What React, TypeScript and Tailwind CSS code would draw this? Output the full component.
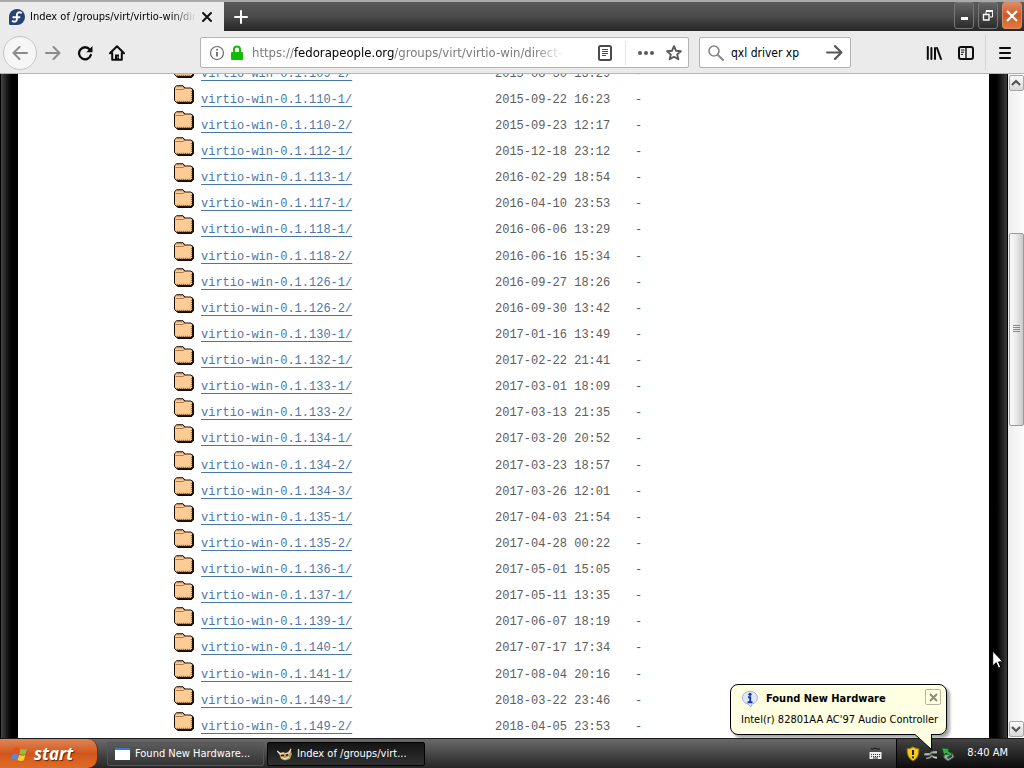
import React from 'react';

type Entry = { name: string; date: string };

const entries: Entry[] = [
  { name: 'virtio-win-0.1.109-2/', date: '2015-08-30 13:29' },
  { name: 'virtio-win-0.1.110-1/', date: '2015-09-22 16:23' },
  { name: 'virtio-win-0.1.110-2/', date: '2015-09-23 12:17' },
  { name: 'virtio-win-0.1.112-1/', date: '2015-12-18 23:12' },
  { name: 'virtio-win-0.1.113-1/', date: '2016-02-29 18:54' },
  { name: 'virtio-win-0.1.117-1/', date: '2016-04-10 23:53' },
  { name: 'virtio-win-0.1.118-1/', date: '2016-06-06 13:29' },
  { name: 'virtio-win-0.1.118-2/', date: '2016-06-16 15:34' },
  { name: 'virtio-win-0.1.126-1/', date: '2016-09-27 18:26' },
  { name: 'virtio-win-0.1.126-2/', date: '2016-09-30 13:42' },
  { name: 'virtio-win-0.1.130-1/', date: '2017-01-16 13:49' },
  { name: 'virtio-win-0.1.132-1/', date: '2017-02-22 21:41' },
  { name: 'virtio-win-0.1.133-1/', date: '2017-03-01 18:09' },
  { name: 'virtio-win-0.1.133-2/', date: '2017-03-13 21:35' },
  { name: 'virtio-win-0.1.134-1/', date: '2017-03-20 20:52' },
  { name: 'virtio-win-0.1.134-2/', date: '2017-03-23 18:57' },
  { name: 'virtio-win-0.1.134-3/', date: '2017-03-26 12:01' },
  { name: 'virtio-win-0.1.135-1/', date: '2017-04-03 21:54' },
  { name: 'virtio-win-0.1.135-2/', date: '2017-04-28 00:22' },
  { name: 'virtio-win-0.1.136-1/', date: '2017-05-01 15:05' },
  { name: 'virtio-win-0.1.137-1/', date: '2017-05-11 13:35' },
  { name: 'virtio-win-0.1.139-1/', date: '2017-06-07 18:19' },
  { name: 'virtio-win-0.1.140-1/', date: '2017-07-17 17:34' },
  { name: 'virtio-win-0.1.141-1/', date: '2017-08-04 20:16' },
  { name: 'virtio-win-0.1.149-1/', date: '2018-03-22 23:46' },
  { name: 'virtio-win-0.1.149-2/', date: '2018-04-05 23:53' },
];

function FolderIcon() {
  return (
    <svg width="20" height="20" viewBox="0 0 20 20" className="block" aria-hidden="true">
      <path d="M1.500 3.500 3.500 1h6l2 2H18l2 2.500v11L17.500 19H4l-3-2.500z" fill="#120a04" />
      <path d="M.5 3 2.500.7h6.500l1.500 2.300h6.500l1.500 1.700v10.800l-1.800 1.800H2.600L.5 15.500z" fill="#fdcb94" stroke="#1c1008" />
      <path d="M1.500 4.500h7.500l2-1.200M3 1.700h5.500" stroke="#b07c4e" fill="none" />
      <path d="M3 16.300h13M17.300 6v9.500" stroke="#8f5a2d" strokeDasharray="1 1" fill="none" />
    </svg>
  );
}

function FedoraIcon() {
  return (
    <svg width="16" height="16" viewBox="0 0 16 16" className="shrink-0" aria-hidden="true">
      <path d="M8 0a8 8 0 1 1 0 16H1.500A1.500 1.500 0 0 1 0 14.500V8a8 8 0 0 1 8-8z" fill="#294172" />
      <path d="M12 3.700C10 2.600 7.900 3.700 7.900 5.700v4.400c0 2.200-2.100 3.200-4.300 2.100M4.300 8.200h6.200" stroke="#fff" strokeWidth="1.900" fill="none" strokeLinecap="round" />
    </svg>
  );
}

function BackArrow() {
  return (
    <svg width="16" height="16" viewBox="0 0 16 16" fill="none" stroke="#8b8b8b" strokeWidth="2" strokeLinecap="round" strokeLinejoin="round" aria-hidden="true">
      <path d="M15 8H1.500M7.500 2l-6 6 6 6" />
    </svg>
  );
}

function ForwardArrow({ color, size }: { color: string; size: number }) {
  return (
    <svg width={size} height={size} viewBox="0 0 16 16" fill="none" stroke={color} strokeWidth="2" strokeLinecap="round" strokeLinejoin="round" aria-hidden="true">
      <path d="M1 8h13.500M8.500 2l6 6-6 6" />
    </svg>
  );
}

function TitleBar() {
  return (
    <header className="flex h-[31px] shrink-0 bg-linear-to-b from-[#5a5a5a] via-[#4a4a4a] to-[#262626] border-t-2 border-[#a9aaa9]">
      <div className="flex w-[224px] shrink-0 items-center bg-[#ebebeb] pl-[9px] pr-2">
        <FedoraIcon />
        <span className="ml-[5px] h-[18px] w-[166px] overflow-hidden whitespace-nowrap text-[11px] leading-[18px] text-black mask-r-from-85% mask-r-to-100%">
          Index of /groups/virt/virtio-win/direct
        </span>
        <button aria-label="Close tab" className="ml-[5px] flex size-3 items-center justify-center">
          <svg width="12" height="12" viewBox="0 0 12 12" stroke="#111" strokeWidth="2" strokeLinecap="round"><path d="m2 2 8 8M10 2l-8 8" /></svg>
        </button>
      </div>
      <button aria-label="New tab" className="flex w-[34px] items-center justify-center">
        <svg width="14" height="14" viewBox="0 0 14 14" stroke="#fff" strokeWidth="2" strokeLinecap="round"><path d="M7 1v12M1 7h12" /></svg>
      </button>
      <div className="ml-auto flex items-start gap-1 pr-[2px]">
        <button aria-label="Minimize" className="flex h-[27px] w-5 items-center justify-center rounded-[3px] border border-[#777] bg-linear-to-b from-[#666] to-[#2c2c2c]">
          <svg width="11" height="11" viewBox="0 0 11 11"><path d="M2 7h7v3H2z" fill="#fff" /></svg>
        </button>
        <button aria-label="Restore" className="flex h-[27px] w-5 items-center justify-center rounded-[3px] border border-[#777] bg-linear-to-b from-[#666] to-[#2c2c2c]">
          <svg width="12" height="12" viewBox="0 0 12 12" fill="none" stroke="#fff"><path d="M4 4V1.500h6.500V7H8" /><path d="M4 1h7" strokeWidth="2" /><path d="M1.500 4.500H7V10H1.500z" strokeWidth="1.400" /></svg>
        </button>
        <button aria-label="Close" className="flex h-[27px] w-5 items-center justify-center rounded-[3px] border border-[#d98a65] bg-linear-to-b from-[#e08a60] via-[#cf5a28] to-[#e07a40]">
          <svg width="12" height="12" viewBox="0 0 12 12" stroke="#fff" strokeWidth="2.200"><path d="m1 1 10 10M11 1 1 11" /></svg>
        </button>
      </div>
    </header>
  );
}

function Toolbar() {
  return (
    <nav className="flex h-[43px] shrink-0 items-center border-b border-[#b4b4b4] bg-[#ebebeb] pt-px pl-[3px]">
      <button aria-label="Back" className="flex size-[34px] items-center justify-center rounded-full border border-[#c4c4c4] bg-[#f6f6f6]"><BackArrow /></button>
      <button aria-label="Forward" className="ml-2 flex size-4 items-center justify-center"><ForwardArrow color="#8b8b8b" size={16} /></button>
      <button aria-label="Reload" className="ml-4 flex size-4 items-center justify-center">
        <svg width="16" height="16" viewBox="0 0 16 16" fill="none" aria-hidden="true">
          <path d="M12.800 4.600A6 6 0 1 0 13.800 10" stroke="#0c0c0d" strokeWidth="2.300" strokeLinecap="round" />
          <path d="M15.500 1v6.200H9.300z" fill="#0c0c0d" />
        </svg>
      </button>
      <button aria-label="Home" className="ml-4 flex size-4 items-center justify-center">
        <svg width="16" height="16" viewBox="0 0 16 16" fill="none" aria-hidden="true">
          <path d="M1 8.200 8 1.300l7 6.900M3.200 8v6.800h9.600V8" stroke="#0c0c0d" strokeWidth="2" strokeLinecap="round" strokeLinejoin="round" />
          <path d="M6 15V9.500h4V15z" fill="#0c0c0d" /><path d="M8.400 11.500h1v1.200h-1z" fill="#ebebeb" />
        </svg>
      </button>

      <div className="ml-[75px] flex h-[31px] min-w-0 flex-1 items-center rounded-[2px] border border-[#b3b3b3] bg-white pl-2">
        <svg width="16" height="16" viewBox="0 0 16 16" fill="none" className="shrink-0" aria-hidden="true">
          <circle cx="8" cy="8" r="6.500" stroke="#6a6a6a" strokeWidth="1.200" /><path d="M8 7v4.500" stroke="#6a6a6a" strokeWidth="1.800" /><circle cx="8" cy="4.700" r="1" fill="#6a6a6a" />
        </svg>
        <svg width="12" height="16" viewBox="0 0 12 16" fill="none" className="ml-[6px] shrink-0" aria-hidden="true">
          <path d="M3 8V4.600a3 3 0 0 1 6 0V8" stroke="#12bc00" strokeWidth="2" /><rect y="7" width="12" height="8" rx="1" fill="#12bc00" />
        </svg>
        <div className="ml-[9px] w-[313px] overflow-hidden whitespace-nowrap text-[13px] leading-[20px] text-[#7b7b7b] mask-r-from-90% mask-r-to-100%">
          https://<span className="text-black">fedorapeople.org</span>/groups/virt/virtio-win/direct-
        </div>
        <button aria-label="Reader view" className="ml-auto shrink-0">
          <svg width="16" height="16" viewBox="0 0 16 16" fill="none" stroke="#4a4a4f" aria-hidden="true"><rect x="2" y="1" width="12" height="14" rx="1.500" strokeWidth="2" /><path d="M5 4.500h6M5 6.500h6M5 8.500h6M5 10.500h4" /></svg>
        </button>
        <span className="ml-3 h-6 w-px shrink-0 bg-[#e4e4e4]" />
        <button aria-label="Page actions" className="ml-3 shrink-0">
          <svg width="16" height="16" viewBox="0 0 16 16" fill="#58585c" aria-hidden="true"><circle cx="2" cy="8" r="2" /><circle cx="8" cy="8" r="2" /><circle cx="14" cy="8" r="2" /></svg>
        </button>
        <button aria-label="Bookmark this page" className="ml-3 mr-[6px] shrink-0">
          <svg width="16" height="16" viewBox="0 0 16 16" fill="none" aria-hidden="true"><path d="m8 1.200 2 4.500 4.900.5-3.700 3.200 1.100 4.900L8 11.800l-4.300 2.500 1.100-4.900L1.100 6.200 6 5.700z" stroke="#58585c" strokeWidth="1.900" strokeLinejoin="round" /></svg>
        </button>
      </div>

      <div className="ml-[10px] flex h-[31px] w-[152px] items-center rounded-[2px] border border-[#b3b3b3] bg-white px-[7px]">
        <svg width="18" height="18" viewBox="0 0 18 18" fill="none" stroke="#858585" className="shrink-0" aria-hidden="true"><circle cx="7" cy="7" r="5" strokeWidth="1.600" /><path d="m10.600 10.600 5.400 5.400" strokeWidth="2" strokeLinecap="round" /></svg>
        <input aria-label="Search" defaultValue="qxl driver xp" className="ml-[6px] w-0 min-w-0 flex-1 bg-transparent text-[12px] leading-[20px] text-black outline-none" />
        <button aria-label="Go" className="shrink-0"><ForwardArrow color="#58585c" size={17} /></button>
      </div>

      <button aria-label="Library" className="ml-[75px] shrink-0">
        <svg width="16" height="16" viewBox="0 0 16 16" stroke="#0c0c0d" strokeWidth="2" strokeLinecap="round" aria-hidden="true"><path d="M1.800 2v12M5.400 3v11M9 3v11M11 3l4 11" /></svg>
      </button>
      <button aria-label="Sidebars" className="ml-4 shrink-0">
        <svg width="16" height="16" viewBox="0 0 16 16" fill="none" stroke="#0c0c0d" aria-hidden="true"><rect x="1" y="2" width="14" height="12" rx="2" strokeWidth="2" /><path d="M8 2v12" strokeWidth="1.400" /><path d="M3 5h3.500M3 7.200h3M3 9.400h2" /></svg>
      </button>
      <span className="ml-[11px] h-[35px] w-px shrink-0 bg-[#d4d4d4]" />
      <button aria-label="Menu" className="mx-3 shrink-0">
        <svg width="14" height="14" viewBox="0 0 14 14" stroke="#0c0c0d" strokeWidth="2" strokeLinecap="round" aria-hidden="true"><path d="M2 2h10M2 7h10M2 12h10" /></svg>
      </button>
    </nav>
  );
}

function ScrollArrow({ label, d }: { label: string; d: string }) {
  return (
    <button aria-label={label} className="flex h-4 w-[15px] shrink-0 items-center justify-center rounded-[2px] border border-[#a8a8a8] bg-linear-to-b from-[#fafafa] to-[#d8d8d8]">
      <svg width="10" height="8" viewBox="0 0 10 8" fill="none" stroke="#555" strokeWidth="2.200" aria-hidden="true"><path d={d} /></svg>
    </button>
  );
}

function Scrollbar() {
  return (
    <div className="flex w-4 shrink-0 flex-col items-center bg-linear-to-r from-[#ededed] to-[#fcfcfc] py-px">
      <ScrollArrow label="Scroll up" d="m1 6 4-4 4 4" />
      <div className="flex-[142]" />
      <div className="flex w-[15px] flex-[192] items-center justify-center rounded-[2px] border border-[#9a9a9a] bg-linear-to-r from-[#fafafa] via-[#e8e8e8] to-[#c8c8c8]">
        <svg width="7" height="8" viewBox="0 0 7 8" stroke="#8a8a8a" aria-hidden="true"><path d="M0 .5h7M0 2.500h7M0 4.500h7M0 6.500h7" /></svg>
      </div>
      <div className="flex-[296]" />
      <ScrollArrow label="Scroll down" d="m1 2 4 4 4-4" />
    </div>
  );
}

function Listing() {
  return (
    <main className="flex min-h-0 flex-1 bg-white">
      <div className="w-[18px] shrink-0 border-l border-black bg-linear-to-r from-[#454545] to-black to-80%" />
      <div className="min-w-0 flex-1 overflow-hidden pl-[156px]">
        <table className="-mt-[15px] table-fixed border-collapse font-['Liberation_Mono',monospace] text-[12px] leading-[21px] text-[#5c5c5c]">
          <colgroup>
            <col className="w-[27px]" /><col className="w-[294px]" /><col className="w-[140px]" /><col className="w-5" />
          </colgroup>
          <tbody>
            {entries.map((e) => (
              <tr key={e.name} className="h-[26px] nth-[8n+7]:h-[27px]">
                <td className="p-0 align-top"><FolderIcon /></td>
                <td className="p-0 pt-[5px] align-top"><a href={e.name} className="text-[#4a76a8] underline decoration-1 underline-offset-[3px]">{e.name}</a></td>
                <td className="p-0 pt-[5px] align-top whitespace-nowrap">{e.date}</td>
                <td className="p-0 pt-[5px] align-top">-</td>
              </tr>
            ))}
          </tbody>
        </table>
      </div>
      <div className="w-[19px] shrink-0 border-r border-black bg-linear-to-r from-black from-20% to-[#3c3c3c]" />
      <Scrollbar />
    </main>
  );
}

function Taskbar() {
  return (
    <footer className="flex h-[30px] shrink-0 border-t border-[#1c1c1c] bg-linear-to-b from-[#6a6a6a] via-[#484848] to-[#262626] text-[11px] text-white">
      <button className="flex w-[98px] shrink-0 items-center rounded-r-[10px] border-r border-[#6b2c0c] bg-linear-to-b from-[#e08550] via-[#d2561c] to-[#dd6d28] pl-[10px]">
        <svg width="20" height="18" viewBox="0 0 20 18" aria-hidden="true">
          <path d="M4 3.200C6 2 8 2 9.800 3.200L8.400 8.400C6.600 7.400 4.600 7.400 2.600 8.400z" fill="#e8501c" />
          <path d="M10.800 3.600c2 1.200 4.200 1.200 6.200.2l-1.500 5.200c-2 1-4 1-6.100-.2z" fill="#8ac43c" />
          <path d="M2.300 9.400c2-1 4-1 5.800 0l-1.500 5.200c-1.800-1-3.800-1-5.800 0z" fill="#5a8ae0" />
          <path d="M9.100 9.800c2 1.200 4.200 1.200 6.200.2l-1.500 5.200c-2 1-4.200 1-6.200-.2z" fill="#f8d030" />
        </svg>
        <span className="ml-1 font-['Open_Sans',sans-serif] text-[17px] leading-[22px] font-bold italic text-shadow-[1px_1px_1px_#5a2408]">start</span>
      </button>
      <button className="mt-[3px] ml-[9px] flex h-6 w-[157px] shrink-0 items-center gap-1 overflow-hidden rounded-[2px] border border-[#555] bg-linear-to-b from-[#5c5c5c] to-[#343434] pl-[7px] whitespace-nowrap">
        <svg width="16" height="14" viewBox="0 0 16 14" className="shrink-0" aria-hidden="true"><path d="M0 1h15v12H0z" fill="#fff" /><path d="M0 1h15v2H0z" fill="#3a78d8" /></svg>
        Found New Hardware...
      </button>
      <button className="mt-[3px] ml-[3px] flex h-6 w-[158px] shrink-0 items-center gap-1 overflow-hidden rounded-[2px] border border-black bg-linear-to-b from-[#151515] to-[#303030] pl-[9px] whitespace-nowrap">
        <svg width="16" height="14" viewBox="0 0 16 14" fill="none" className="shrink-0" aria-hidden="true">
          <path d="M0 4l3 2 3-1 3 1 3-2 2-3v4l1 2-2 5-5 1.500-4-1.500-1-3z" fill="#b89a68" />
          <path d="M0 4l4 3 3-1M8 7l4-1 2-4M4 10l4 2 4-2" stroke="#f0e4c4" strokeWidth="1.200" />
          <path d="M4 8.500h3M9 8.500l2-1" stroke="#241808" strokeWidth="1.500" />
        </svg>
        Index of /groups/virt...
      </button>
      <div className="ml-auto flex w-7 items-center pl-px">
        <svg width="14" height="14" viewBox="0 0 14 14" aria-hidden="true">
          <path d="M2 1.500c2 1.500 3-1 5 0s3 1 4 0" stroke="#111" fill="none" />
          <path d="M.5 5h12v7H.5z" fill="#eee" /><path d="M2 7.500h9M2 9.500h9" stroke="#333" strokeDasharray="1 1" />
          <path d="M4 11h5" stroke="#333" />
        </svg>
      </div>
      <div className="flex w-[128px] shrink-0 items-center border-l border-black bg-linear-to-b from-[#444] to-[#0c0c0c] pl-[9px]">
        <svg width="14" height="16" viewBox="0 0 14 16" aria-hidden="true">
          <path d="M7 .8c2 1.400 3.800 1.800 5.800 1.800.4 5.400-1 9.800-5.800 12.400C2.200 12.400.8 8 1.200 2.600 3.200 2.600 5 2.200 7 .8z" fill="#f4ca1c" stroke="#8d6c08" />
          <path d="M7 4v5" stroke="#222" strokeWidth="2" /><circle cx="7" cy="11.300" r="1.100" fill="#222" />
        </svg>
        <svg width="16" height="16" viewBox="0 0 16 16" className="ml-[3px]" fill="none" aria-hidden="true">
          <path d="M1 8.500h5l3-2h5M3 12.500l4-1 2-2M9 10l3 1.500h2" stroke="#8b958b" strokeWidth="1.800" /><path d="M2 8h4M10 6h4M10 11l4 1" stroke="#dfe3df" />
        </svg>
        <svg width="14" height="16" viewBox="0 0 14 16" className="ml-[2px]" aria-hidden="true">
          <path d="m3 9 8-2 2 4-6 4-4-3z" fill="#9aa8a0" stroke="#4d5a52" /><path d="m6 11 5-2v2l-4 2z" fill="#1b4a44" />
          <path d="M1 2l7 1-1 2 4 3-2 2-4-3-2 2z" fill="#38b048" stroke="#0f5c24" strokeWidth=".7" />
        </svg>
        <time className="ml-auto pr-4 whitespace-nowrap">8:40 AM</time>
      </div>
    </footer>
  );
}

function Balloon() {
  return (
    <aside className="absolute right-[77px] bottom-[33px] h-[51px] w-[217px] rounded-[8px] border border-black bg-[#ffffe1] px-[10px] pt-1 text-[11px] text-black shadow-[3px_3px_3px_rgba(0,0,0,0.35)]">
      <div className="flex h-5 items-center">
        <svg width="18" height="18" viewBox="0 0 18 18" className="shrink-0" aria-hidden="true">
          <path d="M9 1.200a7.500 6.600 0 0 1 1.800 13L10 17l-3-2.800A7.500 6.600 0 0 1 9 1.200z" fill="#dfe8fa" stroke="#a6b3cf" />
          <circle cx="9" cy="4.300" r="1.600" fill="#1a35a5" /><path d="M7 7.300h2.200v4.700M6.500 12.300h5" stroke="#1a35a5" strokeWidth="1.900" fill="none" />
        </svg>
        <strong className="ml-[7px] whitespace-nowrap">Found New Hardware</strong>
      </div>
      <p className="mt-px leading-[20px] whitespace-nowrap">Intel(r) 82801AA AC'97 Audio Controller</p>
      <button aria-label="Close notification" className="absolute top-1 right-[5px] flex size-4 items-center justify-center rounded-[2px] border border-[#b4b4a0]">
        <svg width="9" height="9" viewBox="0 0 9 9" stroke="#8c8c80" strokeWidth="2"><path d="m1 1 7 7M8 1 1 8" /></svg>
      </button>
      <svg width="20" height="17" viewBox="0 0 20 17" className="absolute top-[49px] right-[12px]" aria-hidden="true">
        <path d="M1 0v.5L17.500 15.500V0z" fill="#ffffe1" /><path d="M1 .5 17.500 15.500V0" stroke="#000" fill="none" />
      </svg>
    </aside>
  );
}

export default function App() {
  return (
    <div className="relative flex h-screen flex-col overflow-hidden font-['DejaVu_Sans_Condensed','DejaVu_Sans',sans-serif]">
      <TitleBar />
      <Toolbar />
      <Listing />
      <Taskbar />
      <Balloon />
      <svg width="12" height="20" viewBox="0 0 12 20" className="absolute right-[20px] bottom-[98px]" aria-hidden="true">
        <path d="M.7 1v15l3.500-3.300 2.300 5.500 2.300-1-2.300-5.300h4.600z" fill="#fff" stroke="#000" />
      </svg>
    </div>
  );
}
